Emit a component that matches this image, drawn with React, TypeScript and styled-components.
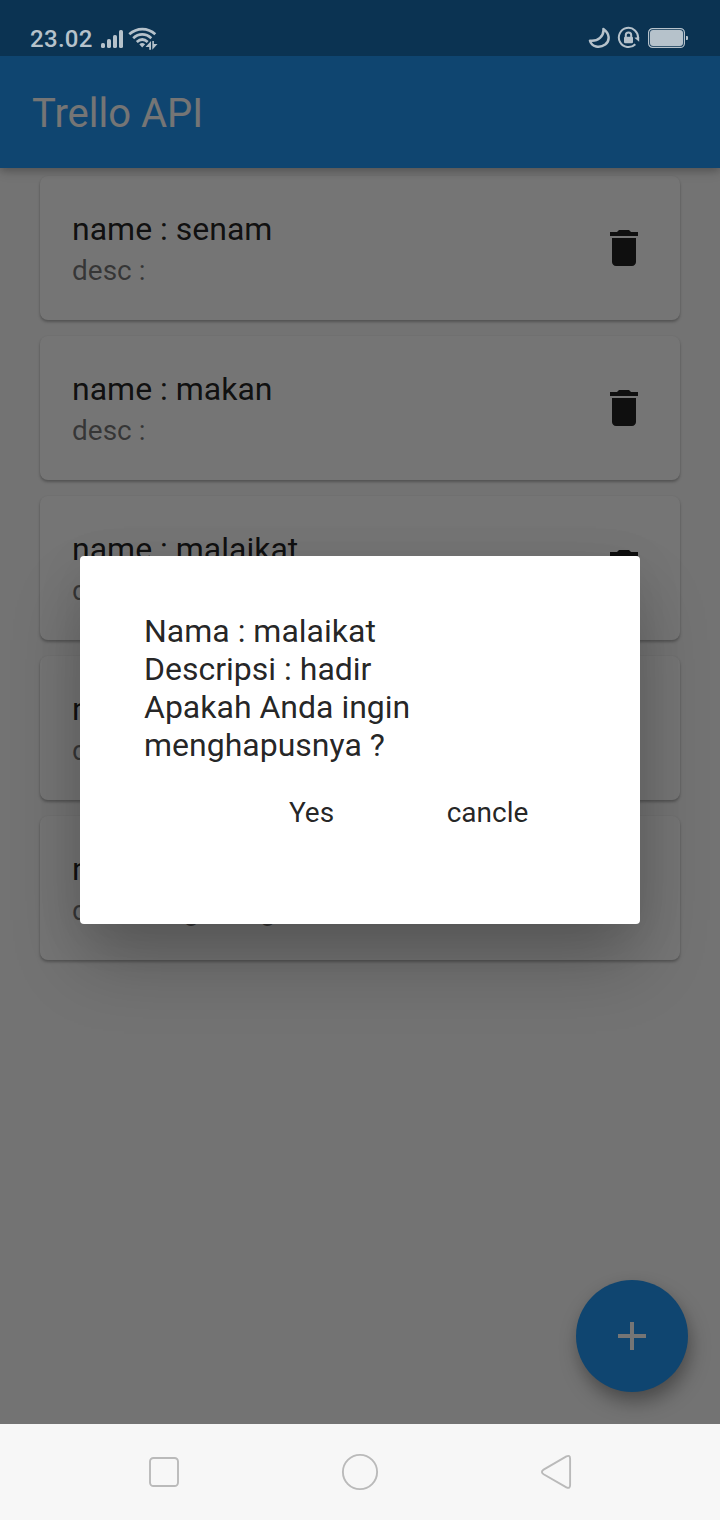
import React from "react";
import styled, { createGlobalStyle } from "styled-components";

const GlobalStyle = createGlobalStyle`
  * { box-sizing: border-box; }
  body { margin: 0; font-family: Roboto, "Liberation Sans", sans-serif; }
  svg { display: block; flex: none; }
`;

const Phone = styled.div`
  width: 720px;
  height: 1520px;
  display: flex;
  flex-direction: column;
  overflow: hidden;
  background: #737373;
`;

const StatusBar = styled.header`
  height: 56px;
  flex: none;
  display: flex;
  align-items: flex-start;
  justify-content: space-between;
  padding: 24px 31px 0 30px;
  background: #0b3352;
  color: #b6c2cb;
`;

const StatusGroup = styled.div<{ $gap: number }>`
  display: flex;
  align-items: center;
  gap: ${(p) => p.$gap}px;
  height: 28px;
`;

const Clock = styled.span`
  font-size: 24px;
  line-height: 28px;
  font-weight: 500;
  letter-spacing: 0.3px;
  padding-top: 2px;
`;

const Screen = styled.main`
  position: relative;
  flex: 1;
  display: flex;
  flex-direction: column;
  background: #fafafa;
  overflow: hidden;
`;

const AppBar = styled.div`
  height: 112px;
  flex: none;
  display: flex;
  align-items: center;
  padding: 4px 32px 0;
  background: #2196f3;
  color: #fff;
  z-index: 1;
  box-shadow: 0 3px 8px rgba(0, 0, 0, 0.22), 0 2px 14px rgba(0, 0, 0, 0.1);
`;

const AppTitle = styled.h1`
  margin: 0;
  font-size: 40px;
  line-height: 48px;
  font-weight: 400;
`;

const List = styled.div`
  display: flex;
  flex-direction: column;
  gap: 16px;
  padding: 8px 40px;
`;

const Card = styled.article`
  height: 144px;
  display: flex;
  align-items: center;
  justify-content: space-between;
  padding: 0 32px;
  background: #fff;
  border-radius: 8px;
  box-shadow: 0 2px 3px rgba(0, 0, 0, 0.28), 0 0 2px rgba(0, 0, 0, 0.05);
`;

const CardText = styled.div`
  padding-top: 2px;
`;

const CardName = styled.div`
  font-size: 32px;
  line-height: 38px;
  color: rgba(0, 0, 0, 0.87);
`;

const CardDesc = styled.div`
  margin-top: 6px;
  font-size: 28px;
  line-height: 34px;
  color: rgba(0, 0, 0, 0.54);
`;

const Fab = styled.button`
  position: absolute;
  right: 32px;
  bottom: 32px;
  width: 112px;
  height: 112px;
  display: flex;
  align-items: center;
  justify-content: center;
  padding: 0;
  border: 0;
  border-radius: 50%;
  background: #2196f3;
  color: #fff;
  box-shadow: 3px 11px 20px -1px rgba(0, 0, 0, 0.34), 0 2px 14px rgba(0, 0, 0, 0.06);
`;

const Scrim = styled.div`
  position: absolute;
  inset: 0;
  z-index: 2;
  display: flex;
  align-items: center;
  justify-content: center;
  background: rgba(0, 0, 0, 0.54);
`;

const Dialog = styled.section`
  width: 560px;
  height: 368px;
  padding: 56px 64px 64px;
  background: #fff;
  border-radius: 4px;
  color: rgba(0, 0, 0, 0.87);
  box-shadow: 0 40px 68px -4px rgba(0, 0, 0, 0.24), 0 10px 50px 0 rgba(0, 0, 0, 0.07);
`;

const DialogText = styled.p`
  margin: 0;
  font-size: 32px;
  line-height: 38px;
  white-space: pre-line;
`;

const Actions = styled.div`
  display: flex;
  justify-content: flex-end;
`;

const FlatButton = styled.button`
  width: 176px;
  height: 96px;
  padding: 2px 1px 0 0;
  border: 0;
  background: none;
  font: 400 28px/34px Roboto, "Liberation Sans", sans-serif;
  color: inherit;
`;

const NavBar = styled.nav`
  height: 96px;
  flex: none;
  display: flex;
  align-items: center;
  justify-content: center;
  gap: 156px;
  background: #f7f7f7;
  color: #bababa;
`;

const SignalIcon = () => (
  <svg width="24" height="24" viewBox="0 0 24 24" fill="currentColor">
    <rect x="1" y="17" width="4" height="5" rx="1.6" />
    <rect x="7" y="13" width="4" height="9" rx="1.6" />
    <rect x="13" y="9" width="4" height="13" rx="1.6" />
    <rect x="19" y="4" width="4" height="18" rx="1.6" />
  </svg>
);

const WifiIcon = () => (
  <svg width="30" height="24" viewBox="0 0 30 24" fill="none" stroke="currentColor" strokeWidth="2.7">
    <path d="M1.300 8.200C9 1.300 19.700 1.300 27.300 8.200" />
    <path d="M5.200 12.200C10.600 7.200 17.900 7.200 23.300 12.200" />
    <path d="M8.800 16C12.200 12.900 16.300 12.900 19.700 16" />
    <path d="M11.300 18.200Q14.200 15.900 17.100 18.200L14.200 21.400Z" fill="currentColor" stroke="none" />
    <path d="M23 15v8.800h-1.800V21H17.500z M24.300 23.800V15h1.600v2.900h3.600z" fill="currentColor" stroke="none" />
  </svg>
);

const MoonIcon = () => (
  <svg width="24" height="24" viewBox="0 0 24 24" fill="none" stroke="currentColor" strokeWidth="2.500" strokeLinejoin="round">
    <path d="M17.400 3C23.800 7.500 24.200 14.600 19.200 18.600C13.700 22.600 5.600 21 4 14.700C8 15.200 11.400 14.200 14 11.900C16.600 9.500 17.800 6.700 17.400 3Z" />
  </svg>
);

const RotationLockIcon = () => (
  <svg width="24" height="24" viewBox="0.5 0 24 24" fill="none" stroke="currentColor" strokeWidth="2">
    <path d="M18.800 18.200A9.600 9.600 0 1 1 21.500 12.500" />
    <path d="M17.800 11.700l4.900-.7v4.800z" fill="currentColor" stroke="none" />
    <rect x="7.500" y="10.700" width="9" height="6.500" rx="1.200" fill="currentColor" stroke="none" />
    <path d="M9.300 11.500V9.100a2.700 2.700 0 0 1 5.400 0v2.400" />
  </svg>
);

const BatteryIcon = () => (
  <svg width="41" height="24" viewBox="0 0 41 24" fill="none">
    <rect x="0.600" y="2.600" width="35.800" height="18.800" rx="4" stroke="currentColor" strokeWidth="1.200" />
    <rect x="2" y="4" width="33" height="16" rx="3" fill="currentColor" />
    <path d="M38 10h1q1 0 1 1v2q0 1-1 1h-1z" fill="currentColor" />
  </svg>
);

const TrashIcon = () => (
  <svg width="48" height="48" viewBox="0 0 24 24" fill="rgba(0,0,0,0.87)">
    <path d="M6 19c0 1.100.9 2 2 2h8c1.100 0 2-.9 2-2V7H6v12zM19 4h-3.500l-1-1h-5l-1 1H5v2h14V4z" />
  </svg>
);

const AddIcon = () => (
  <svg width="48" height="48" viewBox="0 0 24 24" fill="currentColor">
    <path d="M19 13h-6v6h-2v-6H5v-2h6V5h2v6h6v2z" />
  </svg>
);

const NavIcon = ({ children }: { children: React.ReactNode }) => (
  <svg width="40" height="40" viewBox="0 0 40 40" fill="none" stroke="currentColor" strokeWidth="1.900" strokeLinejoin="round">
    {children}
  </svg>
);

const items = [
  { name: "senam", desc: "" },
  { name: "makan", desc: "" },
  { name: "malaikat", desc: "hadir" },
  { name: "", desc: "" },
  { name: "", desc: "bagus reg" },
];

export default function App() {
  return (
    <>
      <GlobalStyle />
      <Phone>
        <StatusBar>
          <StatusGroup $gap={7}>
            <Clock>23.02</Clock>
            <StatusGroup $gap={4}>
              <SignalIcon />
              <WifiIcon />
            </StatusGroup>
          </StatusGroup>
          <StatusGroup $gap={7}>
            <MoonIcon />
            <RotationLockIcon />
            <BatteryIcon />
          </StatusGroup>
        </StatusBar>
        <Screen>
          <AppBar>
            <AppTitle>Trello API</AppTitle>
          </AppBar>
          <List>
            {items.map((item, index) => (
              <Card key={index}>
                <CardText>
                  <CardName>name : {item.name}</CardName>
                  <CardDesc>desc : {item.desc}</CardDesc>
                </CardText>
                <TrashIcon />
              </Card>
            ))}
          </List>
          <Fab aria-label="Add">
            <AddIcon />
          </Fab>
          <Scrim>
            <Dialog role="dialog">
              <DialogText>
                {"Nama : malaikat\nDescripsi : hadir\nApakah Anda ingin menghapusnya ?"}
              </DialogText>
              <Actions>
                <FlatButton>Yes</FlatButton>
                <FlatButton>cancle</FlatButton>
              </Actions>
            </Dialog>
          </Scrim>
        </Screen>
        <NavBar>
          <NavIcon>
            <rect x="6" y="6" width="28" height="28" rx="3.500" />
          </NavIcon>
          <NavIcon>
            <circle cx="20" cy="20" r="17.100" />
          </NavIcon>
          <NavIcon>
            <path d="M34.100 6.700v26.400q0 4-3.700 2.300L7.600 22.200Q4.200 19.900 7.600 17.600L30.400 4.400Q34.100 2.700 34.100 6.700Z" />
          </NavIcon>
        </NavBar>
      </Phone>
    </>
  );
}
